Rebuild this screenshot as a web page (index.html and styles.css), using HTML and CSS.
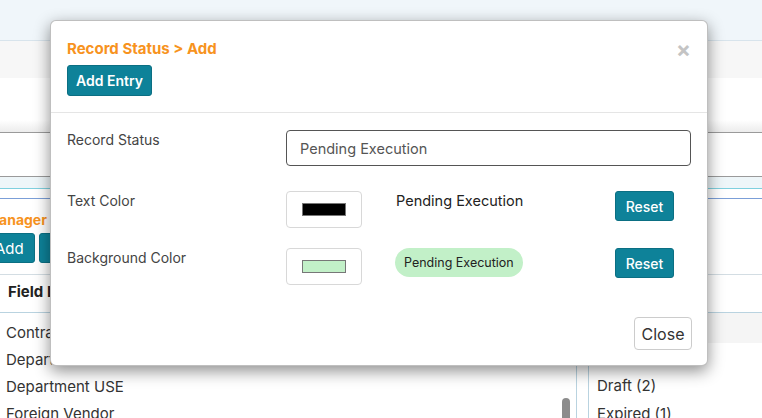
FILE: index.html
```html
<!DOCTYPE html>
<html>
<head>
    <title>Record Status</title>
    <link rel="stylesheet" href="styles.css">
</head>
<body>
    <div class="topbar"></div>
    <div class="subbar"></div>
    <div class="spacer"></div>
    <div class="toolbar"></div>
    <div class="filterbar"></div>
    <div class="tabstrip"></div>
    <div class="tabline"></div>

    <div class="crumb">Manager &gt; Lists</div>
    <div class="actions">
        <button class="btn">Add</button>
        <button class="btn">Edit</button>
    </div>

    <div class="panels">
        <div class="panel left">
            <div class="panel-head">Field List</div>
            <div class="rows">
                <div class="row">Contract Type</div>
                <div class="row">Department</div>
                <div class="row">Department USE</div>
                <div class="row">Foreign Vendor</div>
            </div>
            <div class="scroll-thumb"></div>
        </div>
        <div class="gutter"></div>
        <div class="panel right">
            <div class="panel-head">Field Values</div>
            <div class="row shaded">Active (5)</div>
            <div class="row">Cancelled (1)</div>
            <div class="row">Draft (2)</div>
            <div class="row">Expired (1)</div>
        </div>
    </div>

    <div class="modal">
        <div class="modal-header">
            <h4 class="modal-title">Record Status &gt; Add</h4>
            <button class="btn btn-teal">Add Entry</button>
            <span class="close-x">&times;</span>
        </div>
        <div class="modal-body">
            <div class="form-row first">
                <label>Record Status</label>
                <input class="text-input" type="text" value="Pending Execution">
            </div>
            <div class="form-row colors">
                <label>Text Color</label>
                <div class="swatch"><span class="chip" style="background:#000000"></span></div>
                <div class="preview">Pending Execution</div>
                <button class="btn btn-teal btn-sm">Reset</button>
            </div>
            <div class="form-row colors">
                <label>Background Color</label>
                <div class="swatch"><span class="chip" style="background:#c2f0c8"></span></div>
                <div class="preview"><span class="pill">Pending Execution</span></div>
                <button class="btn btn-teal btn-sm">Reset</button>
            </div>
        </div>
        <div class="modal-footer">
            <button class="btn btn-plain">Close</button>
        </div>
    </div>
</body>
</html>
```

FILE: styles.css
```css
body {
    font-family: Inter, "Noto Sans", Arial, sans-serif;
    margin: 0;
    color: #333;
    background: #fff;
    overflow: hidden;
    height: 418px;
    position: relative;
}
.topbar {
    height: 40px;
    background: #f0f6fa;
    border-bottom: 1px solid #d8e4ec;
}
.subbar {
    height: 37px;
    background: #f7f7f7;
}
.spacer {
    height: 42px;
}
.toolbar {
    height: 12px;
    background: linear-gradient(#fff, #ececec);
    border-bottom: 1px solid #9a9a9a;
}
.filterbar {
    height: 43px;
    border-bottom: 1px solid #9a9a9a;
}
.tabstrip {
    height: 11px;
    background: #eef6f9;
    border-bottom: 1px solid #7fd0df;
}
.tabline {
    height: 9px;
    border-bottom: 1px solid #7b9fd8;
}
.crumb {
    margin: 12px 0 0 -14px;
    font-size: 14px;
    font-weight: 700;
    color: #f7931e;
    line-height: 18px;
}
.actions {
    display: flex;
    gap: 4px;
    margin: 4px 0 0 -16px;
}
.btn {
    font-family: inherit;
    cursor: pointer;
}
.actions .btn {
    height: 30px;
    padding: 0 10px;
    background: #0e8299;
    border: 1px solid #0b6f83;
    border-radius: 3px;
    color: #fff;
    font-size: 15px;
}
.panels {
    display: flex;
    margin-top: 11px;
}
.panel {
    position: relative;
    border-top: 1px solid #d3dde3;
}
.panel.left {
    width: 576px;
}
.gutter {
    width: 11px;
    border-left: 1px solid #b9d3e0;
    border-right: 1px solid #b9d3e0;
}
.panel.right {
    flex: 1;
}
.panel-head {
    height: 37px;
    line-height: 33px;
    padding-left: 8px;
    font-weight: 700;
    font-size: 15px;
    color: #222;
    border-bottom: 1px solid #b9d3e0;
}
.rows {
    padding-top: 6px;
}
.row {
    height: 27px;
    line-height: 28px;
    padding-left: 6px;
    font-size: 15px;
    color: #333;
    white-space: nowrap;
}
.right .row {
    padding-left: 8px;
    height: 28px;
    line-height: 30px;
}
.right .row.shaded {
    background: #f5f5f5;
    height: 30px;
}
.scroll-thumb {
    position: absolute;
    left: 562px;
    top: 123px;
    width: 8px;
    height: 40px;
    border-radius: 4px;
    background: #8c8c8c;
}

/* modal */
.modal {
    position: absolute;
    left: 50px;
    top: 20px;
    width: 656px;
    height: 344px;
    background: #fff;
    border: 1px solid rgba(0, 0, 0, .25);
    border-radius: 6px;
    box-shadow: 0 5px 16px rgba(0, 0, 0, .45);
    display: flex;
    flex-direction: column;
}
.modal-header {
    position: relative;
    padding: 18px 16px 16px;
    border-bottom: 1px solid #e5e5e5;
}
.modal-title {
    margin: 0 0 6px;
    font-size: 15px;
    font-weight: 700;
    line-height: 20px;
    color: #f7931e;
}
.btn-teal {
    background: #0e8299;
    border: 1px solid #0b6f83;
    border-radius: 3px;
    color: #fff;
    font-weight: 600;
}
.modal-header .btn-teal {
    height: 31px;
    width: 85px;
    font-size: 14px;
}
.close-x {
    position: absolute;
    right: 16px;
    top: 16px;
    font-size: 22px;
    line-height: 24px;
    font-weight: 700;
    color: #c4c4c4;
}
.modal-body {
    padding: 17px 16px 0;
}
.form-row {
    display: grid;
    grid-template-columns: 219px 76px 34px 219px 59px;
    align-items: start;
}
.form-row label {
    font-size: 14px;
    line-height: 20px;
    color: #444;
}
.form-row.first {
    grid-template-columns: 219px 1fr;
    margin-bottom: 25px;
}
.text-input {
    height: 36px;
    box-sizing: border-box;
    border: 1px solid #555;
    border-radius: 4px;
    padding: 0 13px;
    font-family: inherit;
    font-size: 14.5px;
    color: #555;
}
.colors {
    margin-bottom: 20px;
}
.swatch {
    grid-column: 2;
    height: 37px;
    box-sizing: border-box;
    border: 1px solid #d8d8d8;
    border-radius: 4px;
    display: flex;
    align-items: center;
    justify-content: center;
}
.chip {
    width: 44px;
    height: 13px;
    box-sizing: border-box;
    border: 1px solid #777;
}
.preview {
    grid-column: 4;
    font-size: 14.5px;
    font-weight: 400;
    line-height: 20px;
    color: #222;
}
.pill {
    display: inline-block;
    height: 29px;
    line-height: 29px;
    padding: 0 9px;
    border-radius: 15px;
    background: #c2f0c8;
    font-size: 12.5px;
    color: #222;
    margin-left: -1px;
}
.btn-sm {
    grid-column: 5;
    height: 30px;
    font-size: 14px;
    font-weight: 500;
}
.modal-footer {
    margin-top: auto;
    padding: 0 15px 15px;
    display: flex;
    justify-content: flex-end;
}
.btn-plain {
    height: 33px;
    width: 58px;
    background: #fff;
    border: 1px solid #ccc;
    border-radius: 4px;
    font-size: 16px;
    color: #333;
}
```
